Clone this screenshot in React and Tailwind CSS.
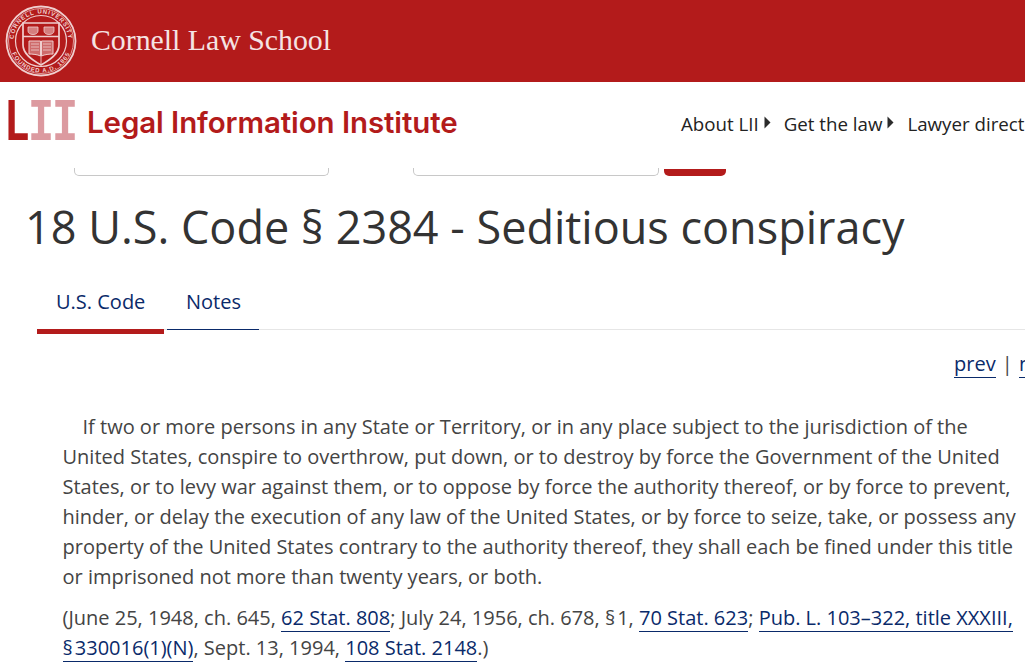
const sans = '"Open Sans", sans-serif';

function Seal() {
  return (
    <svg width="72" height="72" viewBox="0 0 72 72" fill="none" stroke="#f0cfcf" className="shrink-0 mb-[1px]">
      <defs>
        <path id="sealTop" d="M8.500 36a27.500 27.500 0 0 1 55 0" />
        <path id="sealBottom" d="M4.500 36a31.500 31.500 0 0 0 63 0" />
      </defs>
      <circle cx="36" cy="36" r="34.500" strokeWidth="1.8" />
      <circle cx="36" cy="36" r="32.500" strokeWidth=".7" />
      <circle cx="36" cy="36" r="25.500" strokeWidth="1.200" />
      <text fontSize="6" fill="#f0cfcf" stroke="none" fontFamily="Liberation Sans, sans-serif" fontWeight="700" letterSpacing=".9">
        <textPath href="#sealTop" startOffset="50%" textAnchor="middle">CORNELL UNIVERSITY</textPath>
      </text>
      <text fontSize="6" fill="#f0cfcf" stroke="none" fontFamily="Liberation Sans, sans-serif" fontWeight="700" letterSpacing=".9">
        <textPath href="#sealBottom" startOffset="50%" textAnchor="middle">FOUNDED A.D. 1865</textPath>
      </text>
      {/* shield */}
      <path d="M18 18h36v22c0 9-9 15-18 20-9-5-18-11-18-20z" strokeWidth="1.700" />
      <path d="M18 31.500h36" strokeWidth="1.300" />
      <path d="M23 22h10v4c0 2-2 3.500-5 3.500s-5-1.500-5-3.500zM39 22h10v4c0 2-2 3.500-5 3.500s-5-1.500-5-3.500z" fill="#f0cfcf" fillOpacity=".55" strokeWidth=".8" />
      {/* open book */}
      <path d="M24 36h11.500v15c-3-1.500-8-2-11.500-2zM48 36H36.500v15c3-1.500 8-2 11.500-2z" fill="#f0cfcf" fillOpacity=".45" strokeWidth="1" />
      <path d="M26 39h8M26 42h8M26 45h8M38 39h8M38 42h8M38 45h8" strokeWidth=".8" />
      <path d="M36 51v8" strokeWidth=".9" />
    </svg>
  );
}

function Caret() {
  return (
    <svg width="7" height="13" viewBox="0 0 7 13" className="ml-[5px] mb-[3px] shrink-0">
      <path d="M0.500 0.500L6.500 6.500L0.500 12.500z" fill="#2b2b2b" />
    </svg>
  );
}

function StatLink({ children }) {
  return <a className="text-[#0a2a6a] border-b border-[#0a2a6a]">{children}</a>;
}

export default function App() {
  return (
    <div className="w-[1025px] h-[663px] overflow-hidden bg-white text-[#444]" style={{ fontFamily: sans }}>
      {/* Cornell banner */}
      <div className="h-[82px] bg-[#b31b1b] flex items-center pl-[5px]">
        <Seal />
        <span className="ml-[14px] mb-[1px] text-[#f5e3e3] text-[29.800px] whitespace-nowrap" style={{ fontFamily: '"Liberation Serif", serif' }}>
          Cornell Law School
        </span>
      </div>

      {/* LII bar */}
      <div className="h-[78px] flex items-center whitespace-nowrap">
        <div className="w-[680px] shrink-0 flex items-center pl-[4px]">
          <div className="relative w-[72px] h-[44px] mt-[6px]">
            <div className="h-[44px] flex items-center text-[62px] leading-[44px] font-bold tracking-[-3px] scale-x-[.7] origin-left" style={{ fontFamily: '"Liberation Mono", monospace' }}>
              <span className="text-[#b31b1b]">L</span>
              <span className="text-[#dc9aa0]">II</span>
            </div>
          </div>
          <span className="ml-[11px] mt-[2px] text-[#b31b1b] text-[29.500px] font-semibold tracking-[-0.1px]" style={{ fontFamily: '"Inter", sans-serif' }}>
            Legal Information Institute
          </span>
        </div>
        <nav className="flex items-center text-[18.720px] text-[#222] mt-[7px]">
          <span className="pl-[1px]">About LII</span>
          <Caret />
          <span className="ml-[13px]">Get the law</span>
          <Caret />
          <span className="ml-[13px]">Lawyer directory</span>
        </nav>
      </div>

      {/* search forms, cut off by the sticky bar */}
      <div className="h-[16px] flex items-end pl-[74px]">
        <div className="w-[255px] h-[8px] border border-t-0 border-[#c8c8c8] rounded-b-[5px]" />
        <div className="w-[246px] h-[8px] ml-[84px] border border-t-0 border-[#c8c8c8] rounded-b-[5px]" />
        <div className="w-[62px] h-[7px] ml-[5px] bg-[#b31b1b] rounded-b-[5px]" />
      </div>

      <h1 className="mt-[21px] pl-[25px] text-[45px] leading-[60px] text-[#333] whitespace-nowrap">
        18 U.S. Code § 2384 - Seditious conspiracy
      </h1>

      {/* tabs */}
      <div className="mt-[20px] ml-[37px] h-[53px] flex items-start border-b border-[#e6e6e6] text-[20px] text-[#0a2a6a]">
        <div className="w-[127px] h-[57px] pt-[10px] pl-[19px] border-b-[5px] border-[#b31b1b]">U.S. Code</div>
        <div className="w-[92px] h-[53px] ml-[3px] pt-[10px] pl-[19px] border-b border-[#0a2a6a]">Notes</div>
      </div>

      {/* prev | next */}
      <div className="mt-[19px] pl-[954px] h-[30px] text-[20px] leading-[30px] whitespace-nowrap">
        <StatLink>prev</StatLink> <span className="mx-[1px]">|</span> <StatLink>next</StatLink>
      </div>

      <div className="mt-[33px] pl-[62.500px] w-[1017px] text-[20px] leading-[30px]">
        <p className="indent-[20px]">
          If two or more persons in any State or Territory, or in any place subject to the jurisdiction of the United States, conspire to overthrow, put down, or to destroy by force the Government of the United States, or to levy war against them, or to oppose by force the authority thereof, or by force to prevent, hinder, or delay the execution of any law of the United States, or by force to seize, take, or possess any property of the United States contrary to the authority thereof, they shall each be fined under this title or imprisoned not more than twenty years, or both.
        </p>
        <p className="mt-[11px]">
          (June 25, 1948, ch. 645, <StatLink>62 Stat. 808</StatLink>; July 24, 1956, ch. 678, §&#8202;1, <StatLink>70 Stat. 623</StatLink>; <StatLink>Pub. L. 103–322, title XXXIII, §&#8202;330016(1)(N)</StatLink>, Sept. 13, 1994, <StatLink>108 Stat. 2148</StatLink>.)
        </p>
      </div>
    </div>
  );
}
